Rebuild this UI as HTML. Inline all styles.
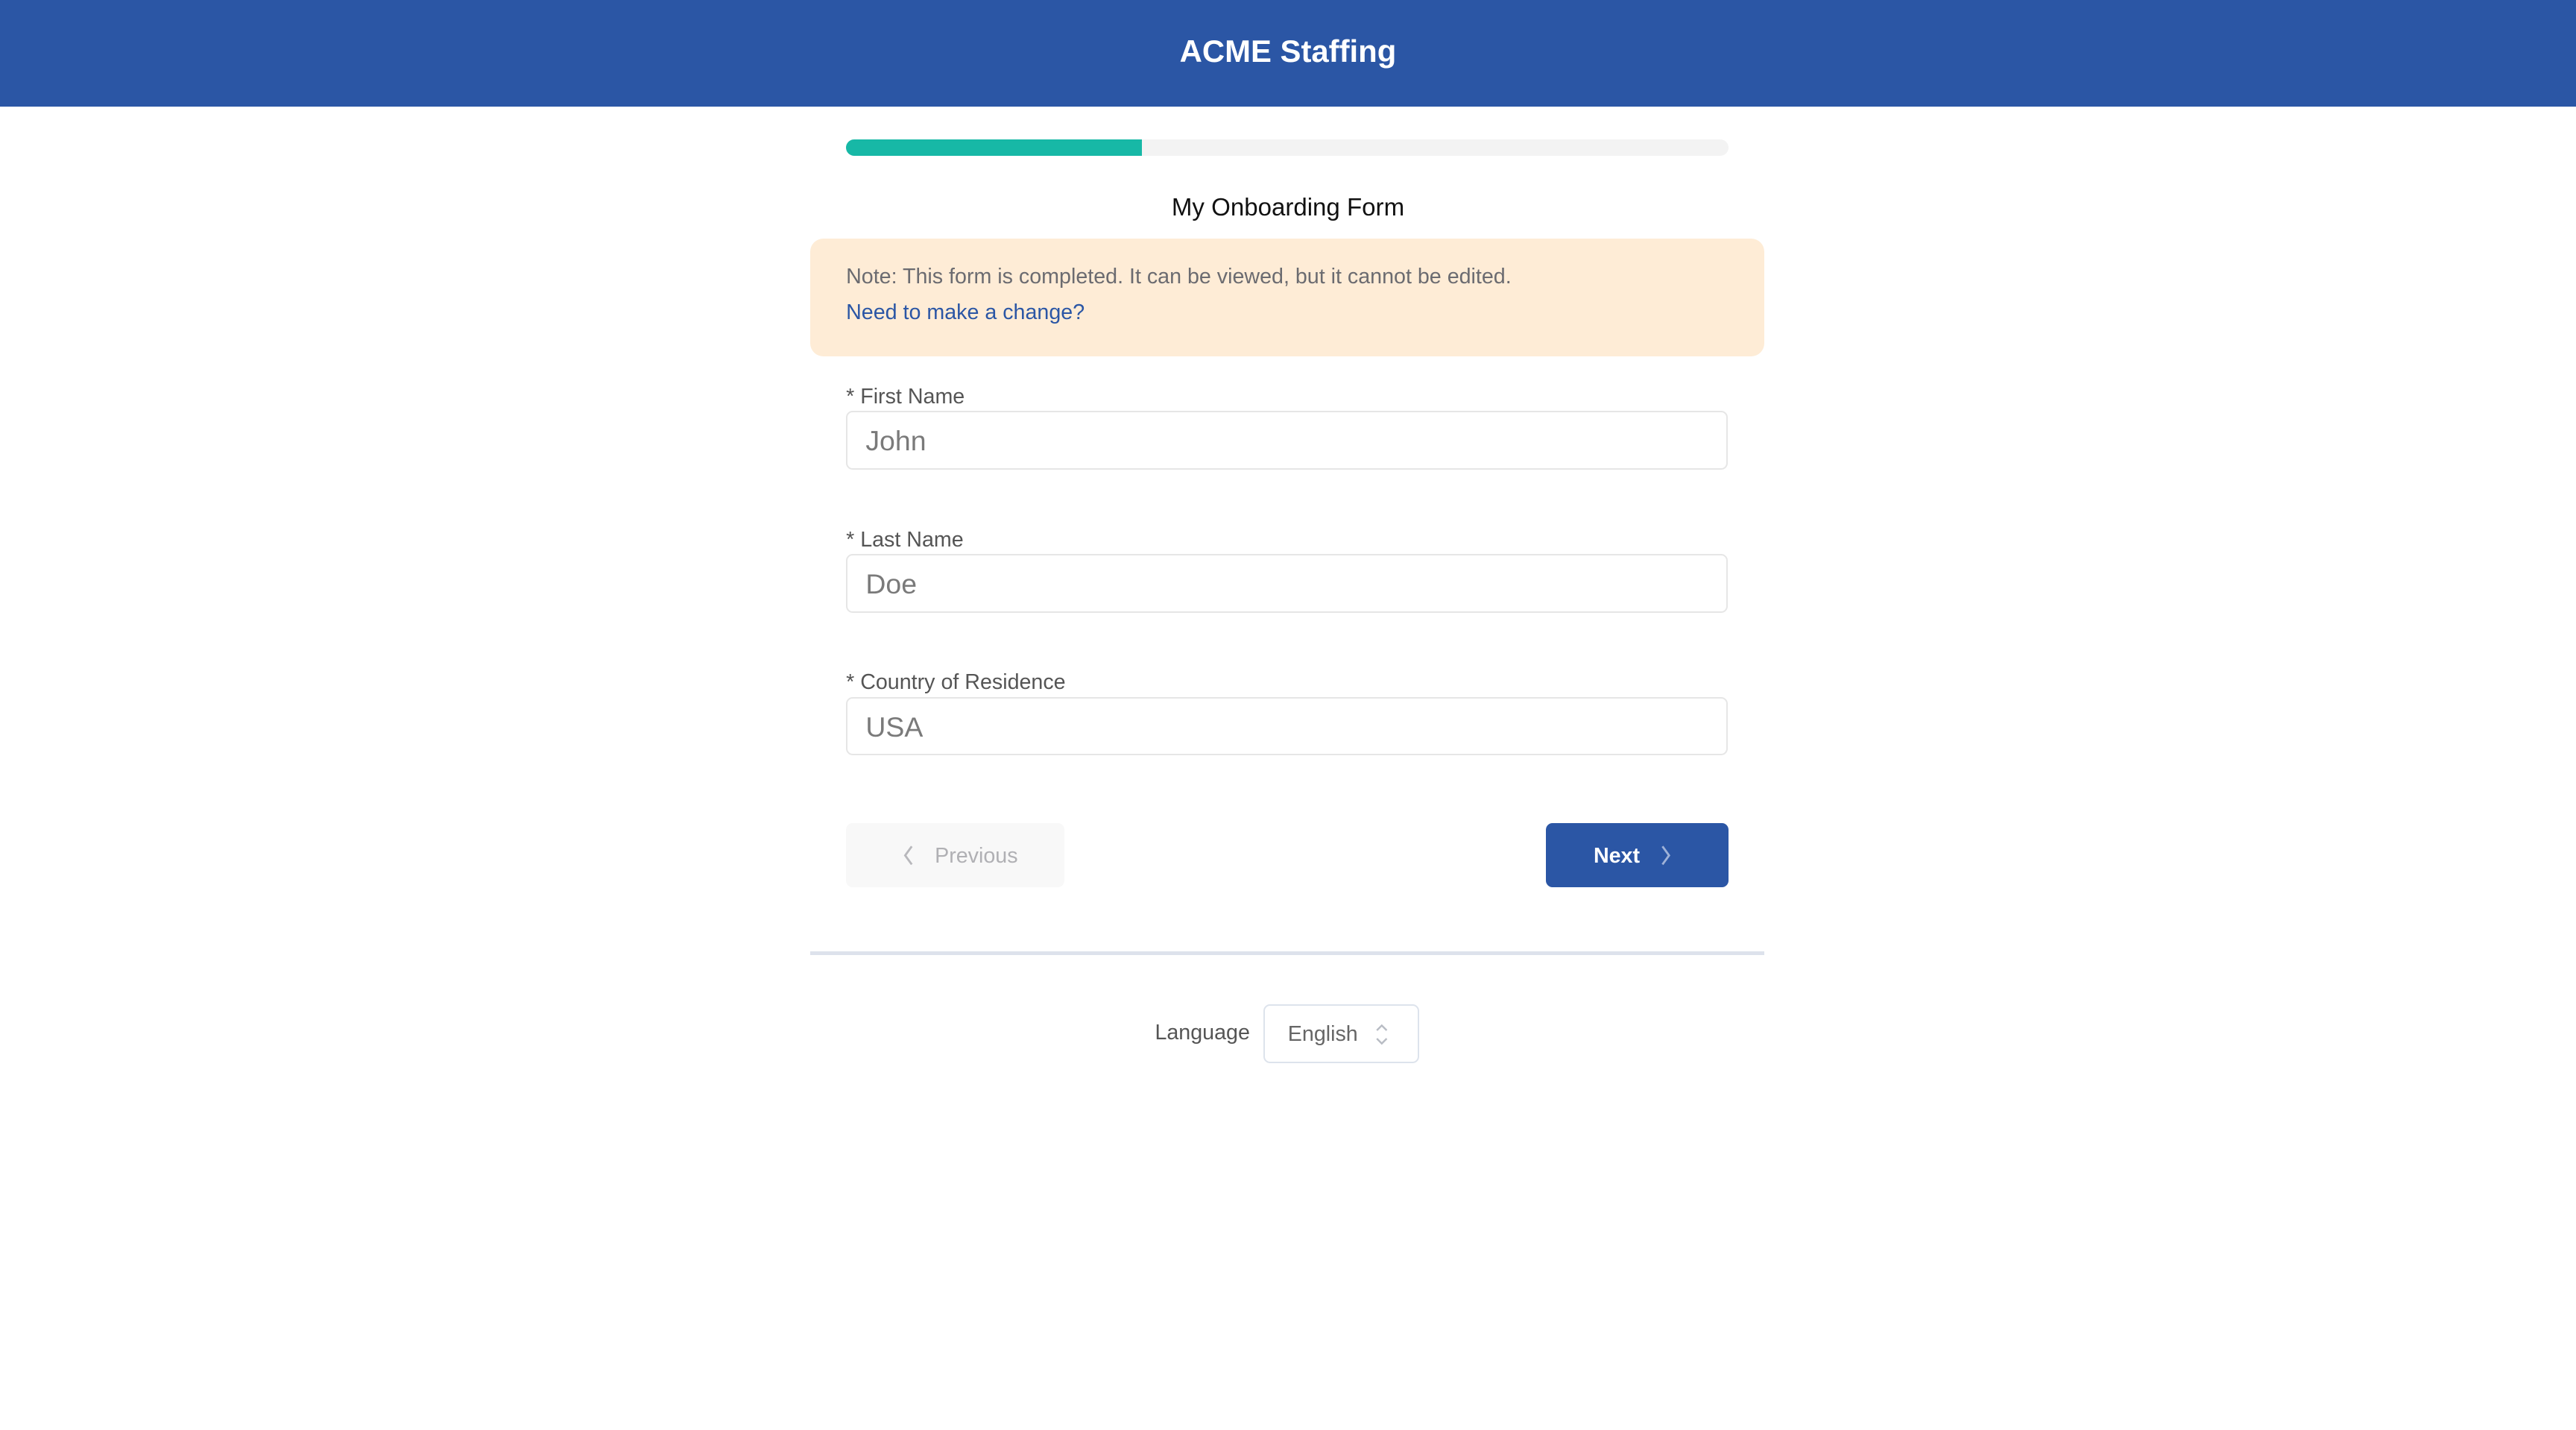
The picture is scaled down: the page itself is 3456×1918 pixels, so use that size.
<!DOCTYPE html>
<html><head><meta charset="utf-8"><style>
html,body{margin:0;padding:0;background:#fff;overflow:hidden}
#w{zoom:2.20408;width:1568px;height:870px;position:relative;font-family:"Liberation Sans",sans-serif}
.a{position:absolute}
.hdr{left:0;top:0;width:1568px;height:65px;background:#2b56a5;color:#fff;font-weight:bold;font-size:19px;text-align:center;line-height:63px}
.lbl{left:515px;font-size:13px;color:#555;}
.inp{left:515px;width:535px;height:34px;border:1px solid #e6e6e6;border-radius:4px;box-sizing:content-box;font-size:17px;color:#7a7a7a;line-height:35px;text-indent:11px}
</style></head><body><div id="w">
<div class="a hdr">ACME Staffing</div>
<div class="a" style="left:515px;top:85px;width:537px;height:10px;background:#f3f3f3;border-radius:5px;overflow:hidden"><div style="width:180px;height:10px;background:#17b8a6"></div></div>
<div class="a" style="left:0;width:1568px;top:118px;text-align:center;font-size:15px;color:#111">My Onboarding Form</div>
<div class="a" style="left:493px;top:145px;width:581px;height:72px;background:#feecd6;border-radius:8px"></div>
<div class="a" style="left:515px;top:161px;font-size:13px;color:#6b6b70">Note: This form is completed. It can be viewed, but it cannot be edited.</div>
<div class="a" style="left:515px;top:183px;font-size:13px;color:#2b56a5">Need to make a change?</div>
<div class="a lbl" style="top:234px">* First Name</div>
<div class="a inp" style="top:250px">John</div>
<div class="a lbl" style="top:321px">* Last Name</div>
<div class="a inp" style="top:337px">Doe</div>
<div class="a lbl" style="top:408px">* Country of Residence</div>
<div class="a inp" style="top:424px">USA</div>
<div class="a" style="left:515px;top:501px;width:133px;height:39px;background:#f8f8f8;border-radius:4px;color:#b0b0b4;font-size:13px;line-height:40px">
<svg class="a" style="left:34px;top:13px" width="8" height="13" viewBox="0 0 8 13"><path d="M6 1L2 6.5 6 12" fill="none" stroke="#b8b8bc" stroke-width="1.3"/></svg>
<span class="a" style="left:54px">Previous</span></div>
<div class="a" style="left:941px;top:501px;width:111px;height:39px;background:#2b56a5;border-radius:4px;color:#fff;font-size:13px;font-weight:bold;line-height:40px">
<span class="a" style="left:29px">Next</span>
<svg class="a" style="left:69px;top:13px" width="8" height="13" viewBox="0 0 8 13"><path d="M2 1L6 6.5 2 12" fill="none" stroke="#9fb2d8" stroke-width="1.3"/></svg></div>
<div class="a" style="left:493px;top:579px;width:581px;height:2px;background:#dde2ec"></div>
<div class="a" style="left:703px;top:621px;font-size:13px;color:#555">Language</div>
<div class="a" style="left:769px;top:611px;width:93px;height:34px;border:1px solid #dde3ec;border-radius:4px;font-size:13px;color:#666;line-height:35px">
<span class="a" style="left:14px">English</span>
<svg class="a" style="left:67px;top:10px" width="8" height="15" viewBox="0 0 8 15"><path d="M1 5L4 2 7 5M1 10L4 13 7 10" fill="none" stroke="#b8bcc4" stroke-width="1.1"/></svg></div>
</div></body></html>
